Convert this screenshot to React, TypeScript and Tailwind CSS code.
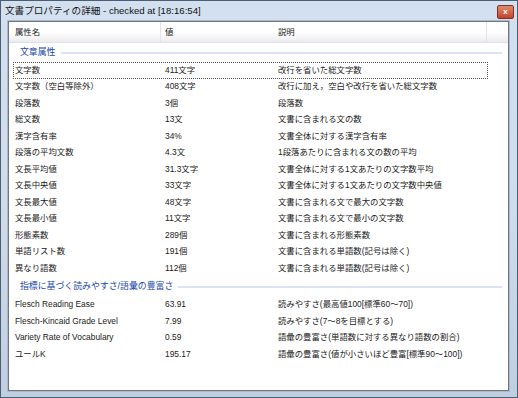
const FONT = { fontFamily: '"Liberation Sans", "Noto Sans CJK JP", sans-serif' };

type Row = { name: string; value: string; desc: string };

const basicRows: Row[] = [
  { name: '文字数', value: '411文字', desc: '改行を省いた総文字数' },
  { name: '文字数（空白等除外）', value: '408文字', desc: '改行に加え，空白や改行を省いた総文字数' },
  { name: '段落数', value: '3個', desc: '段落数' },
  { name: '総文数', value: '13文', desc: '文書に含まれる文の数' },
  { name: '漢字含有率', value: '34%', desc: '文書全体に対する漢字含有率' },
  { name: '段落の平均文数', value: '4.3文', desc: '1段落あたりに含まれる文の数の平均' },
  { name: '文長平均値', value: '31.3文字', desc: '文書全体に対する1文あたりの文字数平均' },
  { name: '文長中央値', value: '33文字', desc: '文書全体に対する1文あたりの文字数中央値' },
  { name: '文長最大値', value: '48文字', desc: '文書に含まれる文で最大の文字数' },
  { name: '文長最小値', value: '11文字', desc: '文書に含まれる文で最小の文字数' },
  { name: '形態素数', value: '289個', desc: '文書に含まれる形態素数' },
  { name: '単語リスト数', value: '191個', desc: '文書に含まれる単語数(記号は除く)' },
  { name: '異なり語数', value: '112個', desc: '文書に含まれる単語数(記号は除く)' },
];

const indexRows: Row[] = [
  { name: 'Flesch Reading Ease', value: '63.91', desc: '読みやすさ(最高値100[標準60～70])' },
  { name: 'Flesch-Kincaid Grade Level', value: '7.99', desc: '読みやすさ(7～8を目標とする)' },
  { name: 'Variety Rate of Vocabulary', value: '0.59', desc: '語彙の豊富さ(単語数に対する異なり語数の割合)' },
  { name: 'ユールK', value: '195.17', desc: '語彙の豊富さ(値が小さいほど豊富[標準90～100])' },
];

const GroupHeader = ({ title, className }: { title: string; className?: string }) => (
  <div className={`flex items-center pl-[11px] pr-[6px] ${className ?? ''}`}>
    <span className="text-[8.9px] text-[#1b49ad] whitespace-nowrap">{title}</span>
    <div className="flex-1 h-[2px] bg-[#dde2f3] ml-[5px]" />
  </div>
);

const ListRow = ({ row, focused }: { row: Row; focused?: boolean }) => (
  <div
    className={`flex items-center h-[16.5px] text-[8.4px] text-[#1a1a1a] ml-[4px] w-[475px] ${
      focused ? 'border border-dotted border-[#555]' : 'border border-transparent'
    }`}
  >
    <div className="w-[151px] pl-[1px] whitespace-nowrap">{row.name}</div>
    <div className="w-[113px] whitespace-nowrap">{row.value}</div>
    <div className="whitespace-nowrap">{row.desc}</div>
  </div>
);

export default function App() {
  return (
    <div
      style={FONT}
      className="w-[518px] h-[398px] flex flex-col border border-[#4f5d70] bg-gradient-to-b from-[#d3e0ef] via-[#cfdcec] to-[#bfcfe2] overflow-hidden"
    >
      <div className="h-[20px] flex items-center justify-between pl-[4px] pr-[3px]">
        <span className="text-[9.6px] text-[#111]">文書プロパティの詳細 - checked at [18:16:54]</span>
        <div className="w-[17px] h-[14px] mt-[2px] rounded-[2px] border border-[#7a3328] bg-gradient-to-b from-[#e38a6c] to-[#c2422a] flex items-center justify-center">
          <span className="text-[8px] font-bold text-white leading-none">x</span>
        </div>
      </div>
      <div className="flex-1 flex pl-[7px] pr-[8px] pb-[6px]">
        <div className="flex-1 border border-[#6f7784] bg-white flex flex-col outline outline-1 outline-[#aeb8c6]">
          <div className="h-[21px] flex items-center text-[8.4px] text-[#1a1a1a] bg-gradient-to-b from-white via-white to-[#ececef] border-b border-[#dfe2e8]">
            <div className="w-[152px] h-full flex items-center pl-[6px] border-r border-[#e2e4e8]">属性名</div>
            <div className="w-[113px] h-full flex items-center pl-[4px]">値</div>
            <div className="w-[213px] h-full flex items-center pl-[4px] border-r border-[#e2e4e8]">説明</div>
            <div className="flex-1" />
          </div>
          <GroupHeader title="文章属性" className="h-[19px]" />
          {basicRows.map((r, i) => (
            <ListRow key={r.name} row={r} focused={i === 0} />
          ))}
          <GroupHeader title="指標に基づく読みやすさ/語彙の豊富さ" className="h-[20px]" />
          {indexRows.map((r) => (
            <ListRow key={r.name} row={r} />
          ))}
        </div>
      </div>
    </div>
  );
}
